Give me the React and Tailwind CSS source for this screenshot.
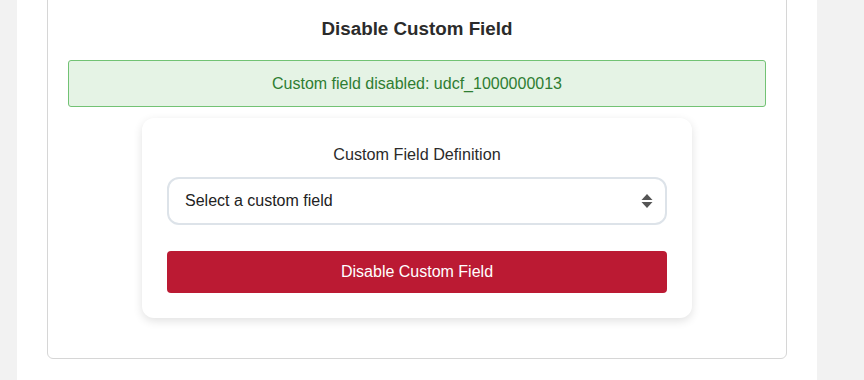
import React from 'react';

const App = () => {
  return (
    <div className="min-h-screen bg-[#f2f2f2] font-['Liberation_Sans',Arial,sans-serif]">
      <div className="ml-[17px] w-[800px] h-[380px] bg-white pl-[30px] pr-[30px] overflow-hidden">
        <div className="-mt-[21px] border border-[#d6d6d6] rounded-[6px] px-[20px] pt-[36px] pb-[40px]">
          {/* Header */}
          <h2 className="text-center text-[18.8px] font-bold text-[#2b2b2b] leading-[26px]">
            Disable Custom Field
          </h2>

          {/* Status */}
          <div className="mt-[18px] h-[47px] flex items-center justify-center bg-[#e5f3e5] border border-[#72c274] rounded-[3px] text-[16px] text-[#2e7d32]">
            Custom field disabled: udcf_1000000013
          </div>

          {/* Form card */}
          <div className="mx-auto mt-[11px] w-[550px] bg-white rounded-[12px] shadow-[0_3px_10px_rgba(0,0,0,0.12)] px-[25px] pt-[26px] pb-[25px]">
            <div className="text-center text-[16.2px] text-[#2b2b2b] leading-[20px]">
              Custom Field Definition
            </div>
            <div className="mt-[13px] h-[48px] border-2 border-[#dde3e9] rounded-[12px] flex items-center justify-between pl-[16px] pr-[12px]">
              <span className="text-[16px] text-[#222]">Select a custom field</span>
              <svg width="12" height="16" viewBox="0 0 12 16" className="text-[#555]">
                <path d="M6 1 L11.5 7 H0.5 Z" fill="currentColor" />
                <path d="M6 15 L11.5 9 H0.5 Z" fill="currentColor" />
              </svg>
            </div>
            <button className="mt-[26px] w-full h-[42px] bg-[#bb1a33] text-white rounded-[4px] text-[16px]">
              Disable Custom Field
            </button>
          </div>
        </div>
      </div>
    </div>
  );
};

export default App;
